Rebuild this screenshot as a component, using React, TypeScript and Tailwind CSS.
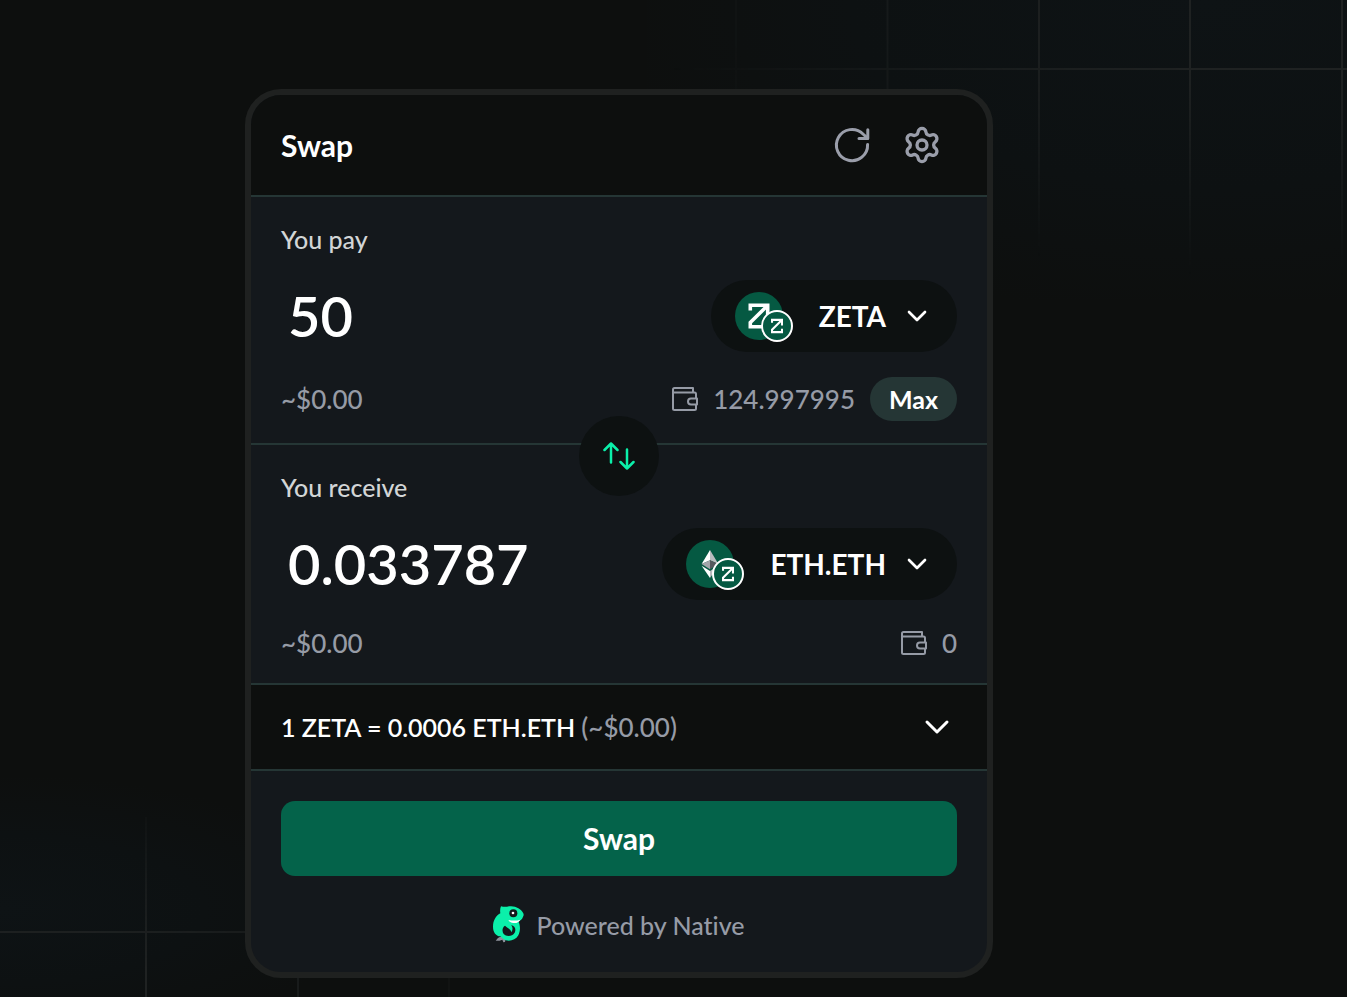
import { useState } from "react";
import { ChevronDown, Settings } from "lucide-react";

type Token = {
  symbol: string;
  icon: "zeta" | "eth";
};

const ZETA: Token = { symbol: "ZETA", icon: "zeta" };
const ETH: Token = { symbol: "ETH.ETH", icon: "eth" };

function Backdrop() {
  return (
    <div className="pointer-events-none absolute inset-0 overflow-hidden" aria-hidden>
      <div className="absolute top-0 right-0 h-[300px] w-[700px] bg-[radial-gradient(ellipse_at_80%_0%,#0e1315_0%,#0d1112_45%,transparent_75%)]" />
      <svg
        className="absolute top-0 right-0 mask-[radial-gradient(ellipse_at_90%_0%,black_20%,transparent_70%)]"
        width="700"
        height="280"
        fill="none"
        stroke="#1f2222"
        strokeWidth="2"
      >
        <path d="M89 0V280M240.500 0V280M392 0V280M543 0V280M695 0V280M0 69H700" />
      </svg>
      <div className="absolute bottom-0 left-0 h-[220px] w-[360px] bg-[radial-gradient(ellipse_at_0%_60%,#0e1315_0%,#0d1112_40%,transparent_72%)]" />
      <svg
        className="absolute bottom-0 left-0 mask-[radial-gradient(ellipse_at_10%_100%,black_20%,transparent_85%)]"
        width="460"
        height="180"
        fill="none"
        stroke="#1f2222"
        strokeWidth="2"
      >
        <path d="M146 0V180M298 0V180M449 0V180M0 115H460" />
      </svg>
    </div>
  );
}

function RefreshIcon() {
  return (
    <svg width="40" height="40" viewBox="0 0 40 40" fill="none" stroke="currentColor" strokeWidth="3" strokeLinecap="round" strokeLinejoin="round">
      <path d="M35.600 19.500A15.600 15.600 0 1 1 31 9L35.500 13.200" />
      <path d="M27 13.500H35.800V4.700" />
    </svg>
  );
}

function WalletIcon() {
  return (
    <svg width="26" height="26" viewBox="0 0 26 26" fill="none" stroke="currentColor" strokeWidth="2" strokeLinejoin="round">
      <path d="M21 6.500V2H2.500Q1 2 1 3.500V22.500Q1 24 2.500 24H22.500Q24 24 24 22.500V18.500M24 12.500V8Q24 6.500 22.500 6.500H1" />
      <path d="M25 12.500H19a3 3 0 0 0 0 6H25Z" />
    </svg>
  );
}

function ZetaMark({ className }: { className?: string }) {
  return (
    <svg className={className} viewBox="0 0 24 28" fill="none" stroke="white" strokeWidth="3.600">
      <path d="M3.300 8.500V3.300H20.700V13" />
      <path d="M20.500 3.500L3.300 20.500V24.700H20.700V19" />
    </svg>
  );
}

function EthMark({ className }: { className?: string }) {
  return (
    <svg className={className} viewBox="0 0 18 30">
      <path d="M9 0L0 15L9 11Z" fill="#ffffff" />
      <path d="M9 0L18 15L9 11Z" fill="#b9bbbf" />
      <path d="M0 15L9 11V20.500Z" fill="#a3a5aa" />
      <path d="M18 15L9 11V20.500Z" fill="#55585e" />
      <path d="M0 17L9 22.500V30Z" fill="#ffffff" />
      <path d="M18 17L9 22.500V30Z" fill="#b9bbbf" />
    </svg>
  );
}

function NativeLogo() {
  return (
    <svg width="31" height="37" viewBox="0 0 93 111" aria-hidden>
      <path d="M10 102C14 94 22 90 30 93L38 98L36 108L31 109L28 101L20 104L8 104Z" fill="#8d929c" />
      <path
        d="M24 1Q36 4 48 1C66 -2 84 8 90 20Q94 26 90 32C88 40 82 44 76 46C82 58 83 74 76 88C68 102 52 107 38 103C30 100 26 94 22 91C8 90 0 78 0 62C0 44 8 30 22 22Q20 9 24 1Z"
        fill="#0bf0aa"
      />
      <path d="M46 42Q66 46 82 41Q76 52 62 51Q50 50 46 42Z" fill="#ffffff" />
      <path d="M36 59C28 63 26 76 32 84C40 93 58 92 65 80C70 70 66 60 54 57C60 63 60 72 55 79C54 70 46 68 36 59Z" fill="#14181c" />
      <circle cx="61" cy="22" r="12" fill="#14181c" />
      <circle cx="60" cy="21" r="4" fill="#ffffff" />
    </svg>
  );
}

function TokenIcon({ icon }: { icon: Token["icon"] }) {
  return (
    <span className="relative h-12 w-[58px]">
      <span className="flex size-12 items-center justify-center rounded-full bg-[#055942]">
        {icon === "zeta" ? <ZetaMark className="h-7 w-6" /> : <EthMark className="h-7 w-[18px]" />}
      </span>
      <span className="absolute top-[18px] left-[26px] flex size-8 items-center justify-center rounded-full border-2 border-white bg-[#055942]">
        <ZetaMark className="h-4 w-3.5" />
      </span>
    </span>
  );
}

function TokenButton({ token }: { token: Token }) {
  return (
    <button
      type="button"
      className="flex h-[72px] shrink-0 items-center rounded-full bg-[#0d1111] px-6 text-[28px] font-bold"
    >
      <TokenIcon icon={token.icon} />
      <span className="mr-[15px] ml-[26px]">{token.symbol}</span>
      <ChevronDown size={32} strokeWidth={2} />
    </button>
  );
}

type FieldProps = {
  id: string;
  label: string;
  value: string;
  onChange: (value: string) => void;
  token: Token;
  balance: string;
  onMax?: () => void;
};

function AmountField({ id, label, value, onChange, token, balance, onMax }: FieldProps) {
  return (
    <div className="border-b-2 border-[#253635] bg-[#14181c] px-[30px] pt-6 pb-[22px]">
      <label htmlFor={id} className="block text-[25px] leading-9 font-medium text-[#d2d5d6]">
        {label}
      </label>
      <div className="mt-[23px] flex items-center justify-between">
        <input
          id={id}
          type="text"
          inputMode="decimal"
          value={value}
          onChange={(e) => onChange(e.target.value)}
          className="h-[72px] w-full min-w-0 flex-1 bg-transparent pl-[7px] text-[56px] font-semibold outline-none"
        />
        <TokenButton token={token} />
      </div>
      <div className="mt-[25px] flex items-center justify-between text-[26px] leading-9 font-medium text-[#969ba6]">
        <span>~$0.00</span>
        <div className="flex items-center">
          <WalletIcon />
          <span className="ml-[15px]">{balance}</span>
          {onMax && (
            <button
              type="button"
              onClick={onMax}
              className="ml-[15px] h-11 w-[87px] rounded-full bg-[#253635] text-[25px] font-bold text-white"
            >
              Max
            </button>
          )}
        </div>
      </div>
    </div>
  );
}

export default function App() {
  const [pay, setPay] = useState("50");
  const [receive, setReceive] = useState("0.033787");

  return (
    <div className="relative min-h-screen bg-[#0d0f0e] font-['Lato',sans-serif] text-white [font-variant-ligatures:none]">
      <Backdrop />
      <main className="relative pt-[89px] pl-[245px]">
        <section className="w-full max-w-[748px] overflow-hidden rounded-[36px] border-6 border-[#1f2120] bg-[#14181c]">
          <header className="flex h-[102px] items-center justify-between border-b-2 border-[#253635] bg-[#0d0f0e] pr-[45px] pl-[30px]">
            <h1 className="text-[30px] font-bold">Swap</h1>
            <div className="flex gap-[30px] text-[#9a9eaa]">
              <button type="button" aria-label="Refresh quote">
                <RefreshIcon />
              </button>
              <button type="button" aria-label="Settings">
                <Settings size={40} strokeWidth={2} />
              </button>
            </div>
          </header>

          <div className="relative">
            <AmountField
              id="pay"
              label="You pay"
              value={pay}
              onChange={setPay}
              token={ZETA}
              balance="124.997995"
              onMax={() => setPay("124.997995")}
            />
            <button
              type="button"
              aria-label="Switch tokens"
              className="absolute -bottom-[51px] left-1/2 flex size-20 -translate-x-1/2 items-center justify-center rounded-full bg-[#0d1111] text-[#0bf0aa]"
            >
              <svg width="32" height="28" viewBox="0 0 32 28" fill="none" stroke="currentColor" strokeWidth="2.500" strokeLinecap="round" strokeLinejoin="round">
                <path d="M8 20.500V1.500M1.500 8L8 1.500L14.500 8" />
                <path d="M24 7.500V26.500M17.500 20L24 26.500L30.500 20" />
              </svg>
            </button>
          </div>
          <AmountField id="receive" label="You receive" value={receive} onChange={setReceive} token={ETH} balance="0" />

          <button
            type="button"
            className="flex h-[86px] w-full items-center justify-between border-b-2 border-[#253635] bg-[#0d0f0e] px-[30px] text-[25px] font-semibold"
          >
            <span>
              1 ZETA = 0.0006 ETH.ETH <span className="text-[26px] font-medium text-[#969ba6]">(~$0.00)</span>
            </span>
            <ChevronDown size={40} strokeWidth={1.8} />
          </button>

          <footer className="px-[30px] pt-[30px] pb-[29px]">
            <button type="button" className="h-[75px] w-full rounded-[14px] bg-[#04634a] text-[30px] font-bold">
              Swap
            </button>
            <p className="mt-[30px] flex items-center justify-center gap-3 text-[25px] leading-9 font-medium text-[#969ba6]">
              <NativeLogo />
              Powered by Native
            </p>
          </footer>
        </section>
      </main>
    </div>
  );
}
